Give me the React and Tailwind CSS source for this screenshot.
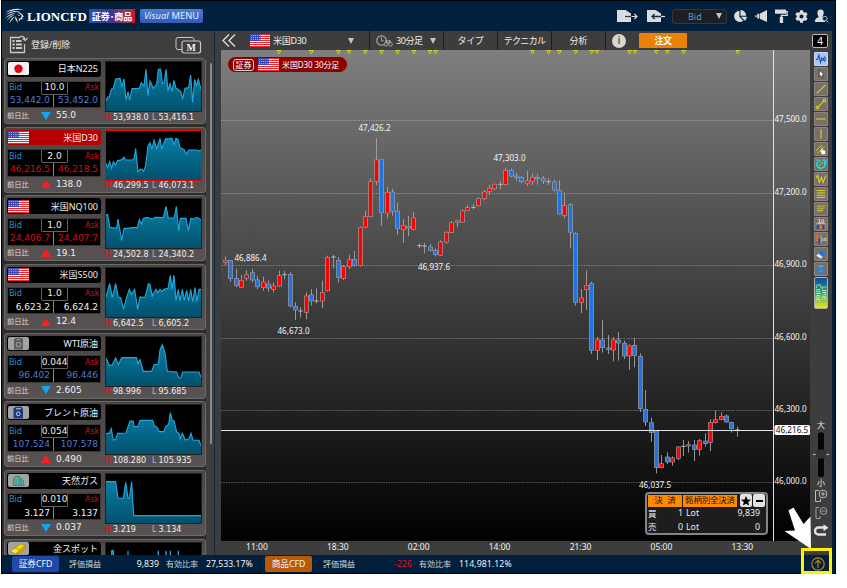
import React from "react";
import { FaChartPie, FaCog } from "react-icons/fa";

const jp = "font-['Noto_Sans','Noto_Sans_CJK_JP',sans-serif]";

/* ---------- shared drawings ---------- */

function UsFlag({ className }) {
  return (
    <svg viewBox="0 0 20 13" preserveAspectRatio="none" className={className}>
      <rect width="20" height="13" fill="#f8f0f0" />
      {[0, 2, 4, 6, 8, 10, 12].map((y) => (
        <rect key={y} y={y} width="20" height="1" fill="#f0242c" />
      ))}
      <rect width="10.5" height="7" fill="#3a48b0" />
      {[1, 3, 5].map((y) =>
        [1, 3, 5, 7, 9].map((x) => <rect key={x + "-" + y} x={x} y={y} width=".9" height=".9" fill="#b9c0ee" />)
      )}
    </svg>
  );
}

function SymbolIcon({ kind }) {
  if (kind === "us") return <UsFlag className="h-[13px] w-[21px] rounded-[1px]" />;
  if (kind === "jp")
    return (
      <svg viewBox="0 0 21 13" className="h-[13px] w-[21px]">
        <rect width="21" height="13" rx="1.5" fill="#f2f2f2" />
        <circle cx="10.5" cy="6.7" r="4.2" fill="#e00010" />
      </svg>
    );
  return (
    <svg viewBox="0 0 21 13" className="h-[13px] w-[21px]">
      <rect width="21" height="13" rx="2" fill="#a3a3a3" />
      {kind === "wti" && (
        <g>
          <path d="M6 2.2 8 .8h6l1 1.500V12.500H6z" fill="#5d5d60" />
          <path d="M8.500 2.500h4" stroke="#a8a8a8" strokeWidth=".8" />
          <circle cx="10.5" cy="7.6" r="2.3" fill="none" stroke="#a8a8a8" />
        </g>
      )}
      {kind === "brent" && (
        <g>
          <path d="M5.500 2.500 8 .8h5.500l1.500 2V12.500H5.500z" fill="#1c3a86" />
          <path d="M8 2.8h5" stroke="#c8d2ee" />
          <circle cx="10.2" cy="7.8" r="1.8" fill="none" stroke="#c8d2ee" />
        </g>
      )}
      {kind === "gas" && (
        <g fill="none" stroke="#27988a" strokeWidth="1.4">
          <path d="M5.5 11V5.5L8 2.5h3V11M8 11V5M13 11V4.5l2.5 3V11" />
          <path d="M4.5 11.3h12" />
        </g>
      )}
      {kind === "gold" && (
        <g stroke="#8f7400" strokeWidth=".5">
          <path d="M2.5 9.5 8 5l5 1.5-5 5.5z" fill="#ffe23a" />
          <path d="M7 6 12.5 2l5 1.5-5 5z" fill="#ffd400" />
          <path d="M8 12l5-5.5 4.5-3v2.5L11 12z" fill="#d9ae00" />
        </g>
      )}
    </svg>
  );
}

function Caret({ className = "" }) {
  return <span className={`inline-block h-0 w-0 border-x-[3.5px] border-t-[6px] border-x-transparent border-t-[#c4c4c4] ${className}`} />;
}

/* ---------- header ---------- */

function Header() {
  return (
    <header className={`flex h-[30px] shrink-0 items-center bg-[#00203e] ${jp}`}>
      <svg viewBox="0 0 20 16" className="ml-[3px] h-[16px] w-[20px]" fill="#ececec">
        <path d="M.5 4.500C5 1 12-.3 18.500 1.600 12 1.500 7 2.800.5 4.500z" />
        <path d="M0 7.300C4.500 3.500 10 2.200 15 3.200 9.500 3.500 5 5 0 7.300z" />
        <path d="M0 10.300C3.500 6.500 7.500 4.800 11.500 4.700 7.500 6 4 8 0 10.300z" />
        <path d="M1.500 12.800C4 9.300 6.500 7.300 10 6.300 7.500 8.200 4.500 10.500 1.500 12.800z" />
        <path d="M4.300 15.200c1-3.200 2.800-5.500 5.500-6.900-1.500 2.200-3.500 4.700-5.500 6.900z" />
        <path d="M12 4.200c3-.4 4.800 1.300 6.800 4.300l-1.600 1 .5 1.700-2.300.1-1 1.700-.8-.5.700-2.200 1.900-.1-.3-1.500 1.300-.4c-1-1.500-2.500-3-5.200-4.100z" />
        <path d="M10.300 8.300c1.400 1.500 2 3.800 2.700 6.800-1-1.500-3.300-3.500-2.700-6.800zM11.500 6.500l3.300.8-.5.700z" />
      </svg>
      <span className="ml-[2px] w-[60px] whitespace-nowrap font-['Liberation_Serif',serif] text-[13px] font-bold leading-none text-white">LIONCFD</span>
      <span className="ml-[2px] flex h-[14px] w-[46px] items-center justify-center whitespace-nowrap bg-gradient-to-r from-[#1450bd] via-[#46328e] to-[#cf0d1c] text-[9px] font-bold leading-none text-white">
        証券･商品
      </span>
      <span className="ml-[5px] flex h-[14px] w-[63px] items-center justify-center gap-[3px] whitespace-nowrap rounded-[2px] bg-gradient-to-b from-[#4a7cd6] to-[#2f5cb8] text-[9.3px] leading-none text-[#e6eefc]">
        <i>Visual</i>
        <span>MENU</span>
      </span>

      <svg viewBox="0 0 22 14" className="ml-[413px] h-[14px] w-[22px]">
        <path d="M1 1h8.500L15 4.500V13H1z" fill="#dcdcdc" />
        <path d="M15.500 7.500H21M18.300 5l2.700 2.500-2.700 2.500" fill="none" stroke="#dcdcdc" strokeWidth="1.200" />
        <path d="M9 7.500h6" stroke="#303a46" strokeWidth="1.300" />
      </svg>
      <svg viewBox="0 0 19 14" className="ml-[8px] h-[14px] w-[19px]">
        <path d="M1 1h8.500L15 4.500V13H1z" fill="#dcdcdc" />
        <path d="M6 7.500h9M8.600 5 6 7.500 8.600 10" fill="none" stroke="#182838" strokeWidth="1.300" />
        <path d="M15 7.500h4" stroke="#dcdcdc" strokeWidth="1.300" />
      </svg>
      <span className="ml-[7px] flex h-[15px] w-[55px] items-center justify-between rounded-[3px] border border-[#35383c] bg-[#1d1f22] pl-[15px] pr-[4px] text-[9px] leading-none text-[#4aa6cc]">
        Bid
        <Caret />
      </span>
      <FaChartPie className="ml-[7px] h-[12px] w-[13px] text-[#dcdcdc]" />
      <svg viewBox="0 0 13 12" className="ml-[8px] h-[12px] w-[13px]" fill="#dcdcdc">
        <path d="M12 0v12L5 8.800V3.600zM4.400 3.800v4.800H2.200V3.800zM.3 5.200h1.300v2H.3z" />
      </svg>
      <svg viewBox="0 0 13 14" className="ml-[7px] h-[14px] w-[13px]" fill="#dcdcdc">
        <path d="M0 .5h11v4.300H0zM11 2h1.800v5H7.200v1.200H5.700V5.800h5.800V3.200H11zM4.800 8h3.300v6H4.800z" />
      </svg>
      <FaCog className="ml-[7px] h-[13px] w-[13px] text-[#dcdcdc]" />
      <svg viewBox="0 0 14 14" className="ml-[7px] h-[14px] w-[14px]">
        <path d="M5.500.5c4 0 4 4.500 1.700 7.300 1 .8 2 .9 2.800 1.600V13H0c0-3.500 1.500-3.900 3.800-5C1.500 4.500 2 .5 5.500.5z" fill="#dcdcdc" />
        <circle cx="9.8" cy="9.6" r="2.300" fill="#00203e" stroke="#b5bcc4" />
        <path d="m11.500 11.500 2 2" stroke="#b5bcc4" />
      </svg>
    </header>
  );
}

/* ---------- watch list ---------- */

const quotes = [
  { name: "日本N225", icon: "jp", spread: "10.0", bid: "53,442.0", ask: "53,452.0", tone: "blue", up: false, diff: "55.0", hi: "53,938.0", lo: "53,416.1",
    line: "0,117 5,105 10,105 16,82 22,79 29,51 42,49 48,75 54,51 60,114 66,89 71,114 78,80 100,79 106,62 114,72 120,22 126,101 132,57 142,79 152,67 157,22 164,22 169,65 174,64 180,22 186,87 192,65 198,89 204,55 210,79 216,82 224,89 230,109 237,79 248,77 254,39 260,122 266,52 272,72 277,52 285,82" },
  { name: "米国D30", icon: "us", active: true, spread: "2.0", bid: "46,216.5", ask: "46,218.5", tone: "red", up: true, diff: "138.0", hi: "46,299.5", lo: "46,073.1",
    line: "0,97 5,110 11,92 17,112 22,92 28,102 35,88 42,88 48,85 54,78 58,87 80,87 84,83 89,53 96,123 102,115 108,115 113,121 119,103 126,45 132,35 138,55 144,27 152,53 162,22 167,53 174,35 180,22 186,25 192,22 198,22 204,40 210,22 216,25 222,50 229,53 235,57 242,70 248,57 272,57 279,60 285,57" },
  { name: "米国NQ100", icon: "us", spread: "1.0", bid: "24,406.7", ask: "24,407.7", tone: "red", up: true, diff: "19.1", hi: "24,502.8", lo: "24,340.2",
    line: "0,47 5,47 11,85 32,88 36,60 47,125 54,88 67,88 77,86 94,86 100,62 107,75 112,58 122,55 132,58 140,60 147,55 172,56 180,22 187,57 205,57 211,22 218,95 223,58 240,58 247,95 254,58 262,60 272,55 285,62" },
  { name: "米国S500", icon: "us", spread: "1.0", bid: "6,623.2", ask: "6,624.2", tone: "white", up: true, diff: "12.4", hi: "6,642.5", lo: "6,605.2",
    line: "0,87 11,47 19,89 29,47 37,87 44,89 53,124 60,94 70,64 77,79 86,64 95,124 102,87 117,89 127,47 132,49 139,84 150,64 155,74 162,64 168,71 174,64 186,61 193,22 198,64 204,22 210,97 217,64 222,99 229,64 235,97 242,67 248,99 254,64 260,101 267,59 273,101 279,64 285,64" },
  { name: "WTI原油", icon: "wti", spread: "0.044", bid: "96.402", ask: "96.446", tone: "blue", up: false, diff: "2.605", hi: "98.996", lo: "95.685",
    line: "0,63 10,85 18,85 29,63 37,83 47,62 92,62 96,81 102,68 112,103 137,103 144,83 157,81 162,38 169,23 177,48 184,103 212,105 218,123 224,123 230,105 279,105 285,121" },
  { name: "ブレント原油", icon: "brent", spread: "0.054", bid: "107.524", ask: "107.578", tone: "blue", up: true, diff: "0.490", hi: "108.280", lo: "105.935",
    line: "0,85 10,85 16,71 22,106 30,101 35,85 60,84 72,48 82,48 84,65 96,65 102,46 140,46 145,63 152,65 160,80 174,80 179,65 188,58 193,23 199,46 204,48 212,81 219,85 223,101 229,85 238,105 249,101 255,85 261,105 279,106 285,123" },
  { name: "天然ガス", icon: "gas", spread: "0.010", bid: "3.127", ask: "3.137", tone: "white", up: false, diff: "0.037", hi: "3.219", lo: "3.134",
    line: "0,23 29,23 36,72 52,73 59,25 66,72 70,72 77,23 83,125 285,125" },
  { name: "金スポット", icon: "gold", folded: true,
    line: "0,66 15,66 17,23 22,23 24,66 64,66 66,23 68,66 154,66 157,23 160,66 178,66 180,23 183,66 191,66 193,23 196,66 215,66 217,23 219,66 285,66" },
];

const tones = { blue: "text-[#5079d6]", red: "text-[#d40e18]", white: "text-[#f0f0f0]" };

function QuoteCard({ q }) {
  return (
    <div className={`flex w-[202px] shrink-0 gap-[4px] rounded-[3px] border border-[#6c6a69] bg-gradient-to-b from-[#4a4646] to-[#585352] pl-[2px] pt-[2px] font-['DejaVu_Sans','Noto_Sans_CJK_JP',sans-serif] leading-none text-[#efefef] ${q.folded ? "h-[17px] overflow-hidden rounded-b-none border-b-0" : "h-[66px]"}`}>
      <div className="flex w-[94px] shrink-0 flex-col">
        <div className={`flex items-center justify-between rounded-[3px] pl-[1px] pr-[3px] ${q.folded ? "h-[15px]" : "h-[16px]"} ${q.active ? "bg-[#b60000]" : "bg-black"}`}>
          <SymbolIcon kind={q.icon} />
          <span className="whitespace-nowrap font-['Noto_Sans','Noto_Sans_CJK_JP',sans-serif] text-[9px] leading-[11px]">{q.name}</span>
        </div>
        {!q.folded && (
          <>
            <div className="mt-[4px] flex h-[28px] flex-col border border-[#3b3a3a] bg-black">
              <div className="flex h-[13px] justify-between text-[8.500px]">
                <span className={`w-[33px] pl-[1px] pt-[1.500px] text-[#1d93d8] ${jp}`}>Bid</span>
                <span className="flex w-[27px] items-center justify-center rounded-b-[2px] border border-t-0 border-[#626262] text-[9px] text-[#f0f0f0]">{q.spread}</span>
                <span className={`w-[32px] pr-[1px] pt-[1.500px] text-right text-[#d40d18] ${jp}`}>Ask</span>
              </div>
              <div className={`flex grow items-center text-[9px] ${tones[q.tone]}`}>
                <span className="flex h-full w-[46px] items-center justify-end border-r border-[#888] pr-[3px]">{q.bid}</span>
                <span className="flex grow items-center justify-end pr-[2px]">{q.ask}</span>
              </div>
            </div>
            <div className="flex h-[15px] items-center text-[9px]">
              <span className="w-[34px] text-[7.300px] text-[#dcdcdc]">前日比</span>
              {q.up ? (
                <span className="h-0 w-0 border-x-[5px] border-b-[8px] border-x-transparent border-b-[#ff1a24]" />
              ) : (
                <span className="h-0 w-0 border-x-[5px] border-t-[8px] border-x-transparent border-t-[#12a5f4]" />
              )}
              <span className="ml-[5px]">{q.diff}</span>
            </div>
          </>
        )}
      </div>
      <div className="flex w-[97px] shrink-0 flex-col">
        <div className={`h-[51px] w-[97px] shrink-0 border bg-black ${q.active ? "border-[#f50000]" : "border-[#222]"}`}>
          <svg viewBox="0 0 285 147" preserveAspectRatio="none" className="block h-full w-full">
            <defs>
              <linearGradient id={"area-" + q.icon + q.spread} x1="0" y1="0" x2="0" y2="147" gradientUnits="userSpaceOnUse">
                <stop offset="0" stopColor="#0a86ad" />
                <stop offset="1" stopColor="#02506c" />
              </linearGradient>
            </defs>
            <polygon points={`0,147 ${q.line} 285,147`} fill={`url(#area-${q.icon}${q.spread})`} />
            <polyline points={q.line} fill="none" stroke="#1fa6dc" strokeWidth="3.400" />
          </svg>
        </div>
        {!q.folded && (
          <div className="flex h-[13px] items-center whitespace-nowrap text-[8px]">
            <span className="w-[8px] text-[#e01018]">H</span>
            <span className="w-[39px]">{q.hi}</span>
            <span className="w-[6.500px] text-[#8fc0dc]">L</span>
            <span>{q.lo}</span>
          </div>
        )}
      </div>
    </div>
  );
}

function WatchList() {
  return (
    <aside className="flex h-full w-[213px] shrink-0 flex-col border-r border-[#16273a] bg-[#3e3e3e]">
      <div className="flex h-[27px] shrink-0 items-center pl-[7px] pr-[12px]">
        <svg viewBox="0 0 20 19" className="h-[19px] w-[20px]" fill="none" stroke="#c8c8c8">
          <path d="M11 2.500H1.500v15h14V9" strokeWidth="1.300" />
          <path d="M3.500 6h2.200M3.500 9.500h2.200M3.500 13h2.200M7 6h5.500M7 9.500h6M7 13h6" strokeWidth="2" />
          <path d="M9.500 3c2.500-2.800 6-2 6.300 1.800M13.500 3.500l2.500 2 2.500-2.500" strokeWidth="1.200" />
        </svg>
        <span className={`ml-[2px] text-[9px] leading-none text-[#ececec] ${jp}`}>登録/削除</span>
        <svg viewBox="0 0 27 18" className="ml-auto h-[18px] w-[27px]" fill="none" stroke="#c8c8c8">
          <rect x="1" y="1.500" width="18" height="12" rx="2" />
          <rect x="7" y="5" width="18.500" height="12" rx="2" fill="#3e3e3e" strokeWidth="1.200" />
          <text x="16.300" y="14.500" textAnchor="middle" fontSize="10" fontWeight="700" fontFamily="Liberation Serif, serif" fill="#f2f2f2" stroke="none">M</text>
        </svg>
      </div>
      <div className="flex min-h-0 grow overflow-hidden">
        <div className="flex w-[204px] shrink-0 flex-col gap-[2.700px] bg-[#2c2c2c] pl-[2px]">
          {quotes.map((q) => (
            <QuoteCard key={q.name} q={q} />
          ))}
        </div>
        <div className="ml-[4px] mt-[5px] h-[381px] w-[2px] rounded bg-[#8a8a8a]" />
      </div>
    </aside>
  );
}

/* ---------- chart toolbar ---------- */

function ChartToolbar() {
  const cell = "flex h-full items-center border-l border-[#1d1d1d]";
  return (
    <div className={`flex h-[19px] shrink-0 items-center whitespace-nowrap bg-[#3d3d3d] text-[9px] leading-none text-[#f0f0f0] ${jp}`}>
      <svg viewBox="0 0 14 13" className="ml-[7px] h-[13px] w-[14px]" fill="none" stroke="#dcdcdc" strokeWidth="1.400">
        <path d="M7 .5 1 6.500l6 6M13 .5 7 6.500l6 6" />
      </svg>
      <UsFlag className="ml-[14px] h-[13px] w-[20px]" />
      <span className="ml-[3px] w-[75px] tracking-[-0.3px]">米国D30</span>
      <Caret />
      <div className={`ml-[15px] w-[74px] pl-[6px] ${cell}`}>
        <svg viewBox="0 0 17 12" className="h-[12px] w-[17px]" fill="none" stroke="#a8a8a8">
          <circle cx="5.500" cy="5.500" r="4.700" strokeWidth="1.200" />
          <path d="M5.500 2.500v3.300h2.300" />
          <path d="M10.500 5v4M13.500 5v4" strokeWidth="2" />
          <circle cx="10" cy="9.300" r="1.800" fill="#3d3d3d" />
          <circle cx="14.500" cy="9.300" r="1.800" fill="#3d3d3d" />
        </svg>
        <span className="ml-[3px] w-[34px] tracking-[-0.4px]">30分足</span>
        <Caret />
      </div>
      <div className={`w-[54px] justify-center tracking-[-0.4px] ${cell}`}>タイプ</div>
      <div className={`w-[54px] justify-center tracking-[-0.700px] ${cell}`}>テクニカル</div>
      <div className={`w-[54px] justify-center ${cell}`}>分析</div>
      <div className={`grow ${cell}`}>
        <span className="ml-[6px] flex h-[14px] w-[14px] items-center justify-center rounded-full bg-[#d6d6d6] font-['DejaVu_Sans',sans-serif] text-[11px] text-[#333]">i</span>
        <span className="ml-[13px] flex h-[15px] w-[48px] items-center justify-center rounded-[1px] bg-[#e88307] text-[9px] font-bold tracking-[-0.5px] text-white">注文</span>
      </div>
      <span className="mr-[4px] mt-[1px] flex h-[14px] w-[16px] items-center justify-center rounded-[2px] border-[1.500px] border-[#b8b8b8] bg-black text-[10px] text-white">4</span>
    </div>
  );
}

/* ---------- candlestick chart ---------- */

const STEP = 16.17;
const FIRST = 13;

// Bars are [kind, open/close top, open/close bottom, high, low] in thirds of a pixel,
// measured from each block's own base line.
const blocks = [
  {
    base: 105,
    bars: [
      ["r", 526, 532, 514, 540], ["b", 526, 581, 526, 590], ["b", 580, 601, 552, 607], ["r", 586, 607, 570, 609], ["r", 569, 580, 556, 587],
      ["b", 563, 585, 552, 592], ["b", 585, 605, 572, 612], ["r", 591, 608, 575, 617], ["b", 597, 609, 586, 620], ["r", 603, 613, 592, 622],
      ["r", 572, 603, 557, 606], ["d", 569, 569, 558, 583], ["b", 568, 663, 562, 668], ["b", 664, 675, 652, 705], ["d", 678, 678, 667, 697],
      ["r", 633, 682, 622, 703], ["b", 629, 648, 612, 662], ["d", 648, 648, 610, 656], ["r", 622, 648, 587, 670], ["r", 517, 617, 512, 620],
      ["d", 516, 516, 510, 550], ["b", 526, 578, 516, 592], ["r", 544, 581, 540, 585], ["r", 524, 545, 509, 552], ["b", 523, 541, 498, 545],
      ["r", 427, 542, 424, 545], ["r", 395, 426, 376, 430], ["r", 290, 394, 280, 396], ["r", 225, 289, 160, 300], ["b", 224, 383, 224, 423],
      ["r", 322, 384, 305, 400], ["b", 321, 379, 311, 392], ["b", 378, 431, 352, 449], ["r", 421, 434, 403, 474], ["b", 424, 429, 393, 454],
      ["r", 399, 433, 381, 436], ["d", 482, 482, 476, 489], ["d", 483, 483, 474, 505], ["b", 486, 497, 477, 500], ["b", 496, 509, 490, 514],
      ["r", 471, 511, 466, 513], ["r", 442, 471, 438, 476], ["r", 413, 442, 408, 444], ["r", 408, 412, 405, 427], ["r", 378, 411, 374, 413],
    ],
  },
  {
    base: 240,
    bars: [
      ["r", 233, 241, 225, 243], ["d", 232, 232, 222, 238], ["r", 206, 227, 202, 230], ["r", 186, 206, 180, 210], ["r", 175, 184, 164, 195],
      ["r", 163, 176, 160, 180], ["d", 163, 163, 154, 177], ["r", 121, 163, 115, 165], ["b", 121, 138, 116, 142], ["b", 138, 142, 128, 152],
      ["b", 142, 155, 138, 160], ["r", 153, 160, 123, 167], ["r", 142, 155, 130, 165], ["b", 142, 146, 132, 164], ["b", 146, 153, 138, 162],
      ["d", 155, 155, 145, 165], ["b", 156, 180, 149, 185], ["b", 181, 252, 151, 254], ["r", 227, 256, 187, 264], ["b", 224, 307, 219, 355],
      ["b", 310, 517, 307, 527], ["r", 504, 517, 477, 549], ["r", 466, 479, 421, 540], ["b", 461, 661, 455, 672], ["r", 630, 661, 620, 690],
      ["b", 630, 653, 570, 668], ["b", 654, 658, 615, 672], ["r", 630, 660, 622, 694], ["b", 630, 639, 607, 692], ["b", 640, 678, 632, 687],
    ],
  },
  {
    base: 690,
    bars: [
      ["r", 198, 228, 193, 270], ["b", 196, 227, 173, 262], ["b", 229, 386, 220, 396], ["b", 388, 426, 330, 438], ["b", 428, 458, 413, 485],
      ["b", 452, 563, 450, 580], ["r", 551, 563, 525, 565], ["b", 531, 546, 517, 552], ["r", 534, 546, 529, 557], ["r", 501, 535, 498, 540],
      ["d", 499, 499, 480, 528], ["r", 494, 498, 483, 518], ["b", 495, 508, 480, 543], ["r", 482, 508, 477, 527], ["b", 483, 491, 460, 500],
      ["r", 427, 487, 418, 513], ["r", 419, 428, 392, 430], ["r", 409, 419, 397, 421], ["b", 408, 426, 403, 428], ["b", 427, 446, 425, 458],
      ["d", 450, 450, 440, 470],
    ],
  },
];

const candles = blocks
  .flatMap((b) => b.bars.map(([k, t, bt, h, l]) => [k, t + b.base, bt + b.base, h + b.base, l + b.base]))
  .map(([kind, top, bottom, high, low], i) => ({
    kind,
    x: Math.round((FIRST + i * STEP) / 3 - 0.5) + 0.5,
    top: (top - 150 + 0) / 3 + 50,
    bottom: (bottom - 150) / 3 + 50,
    high: (high - 150) / 3 + 50,
    low: (low - 150) / 3 + 50,
  }));

const grid = [
  [70.5, "47,500.0"],
  [143.5, "47,200.0"],
  [215.5, "46,900.0"],
  [288.5, "46,600.0"],
  [360.5, "46,300.0"],
  [432.5, "46,000.0"],
];

const peaks = [
  [13.5, 211, "46,886.4"],
  [56.5, 283.5, "46,673.0"],
  [137.5, 80.5, "47,426.2"],
  [197, 220, "46,937.6"],
  [272.5, 111, "47,303.0"],
  [418, 437.5, "46,037.5"],
];

const events = [58, 90.3, 117.3, 128, 144.3, 160.7, 176.7, 193, 209, 214.7, 311.5, 327.7, 338.3, 354.7, 370.7, 376, 408.7, 414, 435.3, 446.3, 462.7, 516.7];

function CandleChart() {
  return (
    <svg viewBox="0 0 589 491" className="block h-[491px] w-[589px]" fontFamily="Noto Sans, sans-serif" fontSize="8" fill="#f4f4f4">
      <defs>
        <linearGradient id="backdrop" x1="0" y1="0" x2="0" y2="1">
          <stop offset="0" stopColor="#7f7f7f" />
          <stop offset="0.55" stopColor="#383838" />
          <stop offset="1" stopColor="#000" />
        </linearGradient>
      </defs>
      <rect width="589" height="491" fill="url(#backdrop)" />
      {events.map((x) => (
        <g key={x} fill="#f2f200">
          <path d={`M${x - 2.3} .3h4.600L${x} 4.300z`} />
          <rect x={x - 0.7} y="1.200" width="1.400" height="1.200" fill="#55550a" />
        </g>
      ))}
      {grid.map(([y, label]) => (
        <g key={label}>
          <path d={`M0 ${y}H552`} stroke="#fff" strokeOpacity=".3" strokeDasharray="1.500 1" />
          <text x="553.5" y={y + 1.5} textLength="32" lengthAdjust="spacingAndGlyphs">
            {label}
          </text>
        </g>
      ))}
      {candles.map((c, i) => (
        <g key={i}>
          <path d={`M${c.x} ${c.high}V${c.low}`} stroke="#a4a4a4" strokeWidth=".9" />
          {c.kind === "d" ? (
            <path d={`M${c.x - 2.2} ${c.top}h4.400`} stroke="#bdbdbd" strokeWidth="1" />
          ) : (
            <>
              <rect x={c.x - 2.3} y={c.top - 0.3} width="4.600" height={Math.max(c.bottom - c.top, 1) + 0.6} fill="#a8a8a8" />
              <rect x={c.x - 1.7} y={c.top + 0.2} width="3.400" height={Math.max(c.bottom - c.top - 0.4, 0.8)} fill={c.kind === "r" ? "#ff0000" : "#2272e0"} />
            </>
          )}
        </g>
      ))}
      <path d="M0 380.500H553" stroke="#e4e4e4" />
      <path d="M552.500 0V491" stroke="#e0e0e0" />
      <rect x="553.5" y="375" width="35.500" height="10" rx="1.500" fill="#fff" />
      <text x="554.8" y="383" fill="#111" textLength="32.500" lengthAdjust="spacingAndGlyphs">46,216.5</text>
      {peaks.map(([x, y, t]) => (
        <text key={t} x={x} y={y} textLength="32" lengthAdjust="spacingAndGlyphs">
          {t}
        </text>
      ))}
    </svg>
  );
}

function SymbolBadge() {
  return (
    <div className={`absolute left-[7px] top-[7px] flex h-[15px] w-[119px] items-center whitespace-nowrap rounded-full bg-[#8c0000] pl-[5px] text-[8px] leading-none text-white ${jp}`}>
      <span className="flex h-[12px] w-[21px] items-center justify-center rounded-[3px] border border-[#e8c8c8]">証券</span>
      <UsFlag className="ml-[4px] h-[13px] w-[21px]" />
      <span className="ml-[3px] tracking-[-0.1px]">米国D30 30分足</span>
    </div>
  );
}

function PositionPanel() {
  const btn = "flex h-[12px] items-center justify-center bg-[#ff8a00] text-[8.500px] text-[#2c1600]";
  const cap = "flex h-[13px] w-[12px] items-center justify-center rounded-[2px] bg-[#e2e2e2]";
  return (
    <div className={`absolute bottom-[6px] left-[424px] h-[43px] w-[123px] rounded-[4px] border-2 border-[#858585] bg-[#1d1d1d] px-[1px] text-[8.800px] leading-none text-[#ececec] ${jp}`}>
      <div className="flex items-center gap-[1px]">
        <span className={`w-[34px] ${btn}`}>決&nbsp;&nbsp;済</span>
        <span className={`w-[54px] whitespace-nowrap tracking-[-0.2px] ${btn}`}>銘柄別全決済</span>
        <span className={`ml-[2px] ${cap}`}>
          <svg viewBox="0 0 10 10" className="h-[10px] w-[10px]">
            <path d="M5 0l1.400 3.400 3.600.3-2.800 2.300.9 3.600L5 7.700 1.900 9.600l.9-3.600L0 3.700l3.600-.3z" fill="#000" />
          </svg>
        </span>
        <span className={cap}>
          <span className="h-[2px] w-[7px] bg-black" />
        </span>
      </div>
      {[
        ["買", "1", "9,839"],
        ["売", "0", "0"],
      ].map(([side, lot, pl]) => (
        <div key={side} className="flex h-[13.500px] items-center">
          <span className="w-[10px] text-[8.500px]">{side}</span>
          <span className="w-[25px] text-right">{lot}</span>
          <span className="ml-[3px]">Lot</span>
          <span className="ml-auto pr-[5px]">{pl}</span>
        </div>
      ))}
    </div>
  );
}

function TimeAxis() {
  return (
    <div className="flex h-[14px] shrink-0 items-center bg-[#3d3d3d] pl-[1.500px] font-['Noto_Sans',sans-serif] text-[8.500px] leading-none text-[#f2f2f2]">
      {["11:00", "18:30", "02:00", "14:00", "21:30", "05:00", "13:30"].map((t) => (
        <span key={t} className="w-[80.900px] shrink-0 pb-[2px] text-center">
          {t}
        </span>
      ))}
    </div>
  );
}

/* ---------- drawing tools ---------- */

const Y = "#e0d820";
const tools = [
  <path key="a" d="M1 7.500h2l1.500-5 2 8.500 1.500-5 .8 2.500M9.500 5.500q1 1.500 0 3.500M11 4q2 3 0 6" stroke="#1b4fb8" strokeWidth="1.300" fill="none" />,
  <path key="b" d="M5 2v8.500l1.800-1.500L8 12l1.500-.6L8.300 8.500l2.500-.3z" fill="#fff" stroke="#000" strokeWidth=".7" />,
  <path key="c" d="M2 12 12 2.500" stroke={Y} strokeWidth="1.200" />,
  <g key="d" stroke={Y} fill="none" strokeWidth="1.200"><path d="M4 10l6-6" /><circle cx="2.900" cy="11" r="1.500" /><circle cx="11" cy="3" r="1.500" /></g>,
  <path key="e" d="M1.500 7h11" stroke={Y} strokeWidth="1.200" />,
  <path key="f" d="M7 1.500v11" stroke={Y} strokeWidth="1.200" />,
  <g key="g"><path d="M1 9l7-6.500M3 12l8-8" stroke={Y} /><path d="M7.500 6v3L6 8.500 8 13h4V9L8.800 8V6z" fill="#fff" /></g>,
  <g key="h" fill="none"><path d="M3 4.500C1 8 3 12 7 12s6-4.500 3.800-8" stroke="#15e0ea" strokeWidth="2" /><path d="M8.500 2.500h4v4" stroke="#15e0ea" strokeWidth="1.600" /><path d="M1.500 2.500h4v3" stroke="#15e0ea" strokeWidth="1.300" /><path d="M5 9l4-4" stroke={Y} /></g>,
  <path key="i" d="M1 6 3 2.500 5 11l2.500-6 2 6 3-8" stroke={Y} fill="none" strokeWidth="1.200" />,
  <path key="j" d="M2 3h10M2 5.700h10M2 8.400h10M2 11h10" stroke={Y} strokeWidth="1.100" />,
  <path key="k" d="M2 3.500h10M2 6h9M2 8.500h7M4 11l2.500-2.500 3 .5" stroke={Y} fill="none" strokeWidth=".9" />,
  <g key="l"><text x="7" y="5.500" fontSize="6" fill="#fff" textAnchor="middle" fontFamily="DejaVu Sans">10</text><path d="M2 7.500V6.500h10v1" stroke="#eee" fill="none" strokeWidth=".7" /><path d="M2 8h2.500v5H2zM9 8h2v5H9z" fill="#1746c8" /><path d="M5.500 8h2v5h-2zM11.500 8H13v5h-1.500z" fill="#f07018" /></g>,
  <g key="m"><text x="10.500" y="9" fontSize="5" fill="#fff" textAnchor="middle" fontFamily="DejaVu Sans">10</text><path d="M1.500 1.500h2.500v8H1.500z" fill="#f07018" /><path d="M4 6h2v7H4z" fill="#1746c8" /><path d="M7 2v10" stroke="#ddd" strokeWidth=".6" /></g>,
  <g key="n"><path d="M1.500 9 7.500 2.500l5 3.500-5 6.500z" fill="#1c78d8" /><path d="M1.500 9 3.800 6.500l5 3.800L7 12.500z" fill="#eaf2ff" /></g>,
  <g key="o"><path d="M3 4h8l-1 9H4z" fill="#2f7fc4" /><ellipse cx="7" cy="3.700" rx="4" ry="1.500" fill="#6fa8d8" stroke="#2b6aa8" strokeWidth=".6" /><path d="M5.500 7h3v3h-3z" fill="none" stroke="#5a9fd8" strokeWidth=".7" /></g>,
];

function DrawingTools() {
  return (
    <div className={`flex w-[22px] shrink-0 flex-col items-center bg-[#3d3d3d] pt-[1.500px] text-[8px] leading-none text-[#e6e6e6] ${jp}`}>
      <div className="flex flex-col gap-[1px]">
        {tools.map((t, i) => (
          <svg key={i} viewBox="0 0 14 14" className={`h-[14.060px] w-[14px] rounded-[1px] border ${i === 0 ? "border-[#c4d8f6] bg-[#a8c8f4]" : "border-[#8f877e] bg-[#787068]"}`}>
            {t}
          </svg>
        ))}
      </div>
      <div className="mt-[1px] flex h-[32px] w-[14px] items-center justify-center rounded-[2px] border border-[#b0b0a0] bg-gradient-to-b from-[#1648a0] via-[#34a060] to-[#e8e800]">
        <span className="text-center text-[7px] leading-[6px] text-[#dff0e0] [writing-mode:vertical-rl]">
          Line
          <br />
          Color
        </span>
      </div>
      <span className="mt-[112px]">大</span>
      <svg viewBox="0 0 16 48" className="mt-[2px] h-[48px] w-[16px]">
        <rect x="4.5" y="1" width="7" height="45.500" rx="2.500" fill="#050505" stroke="#555" strokeWidth=".6" />
        <rect x="3" y="18.500" width="10" height="9" rx="2" fill="#333" />
        <path d="M0 23.500h2.500M13.500 23.500H16" stroke="#ccc" />
      </svg>
      <span>小</span>
      <svg viewBox="0 0 14 14" className="mt-[1.500px] h-[14px] w-[14px]" fill="none" stroke="#bbb">
        <path d="M5 1.500H1.500v11h5V10" />
        <circle cx="9" cy="5" r="3.900" />
        <path d="M6.800 5h4.400M9 2.800v4.400" />
      </svg>
      <svg viewBox="0 0 14 14" className="mt-[3px] h-[14px] w-[14px]" fill="none" stroke="#a0a0a0">
        <path d="M5 1.500H2v11h4V10" />
        <circle cx="9.5" cy="5" r="3.400" />
        <path d="M7.500 5h4" />
      </svg>
      <svg viewBox="0 0 15 12" className="mt-[4px] h-[12px] w-[15px]">
        <path d="M12 10.500H4.500a3.500 3.500 0 0 1 0-7H10" fill="none" stroke="#e4e4e4" strokeWidth="2.400" />
        <path d="M9.500.2 14.500 3.700 9.500 7.200z" fill="#e4e4e4" />
      </svg>
    </div>
  );
}

/* ---------- footer ---------- */

function Footer() {
  const tag = "flex h-[16px] w-[47px] items-center justify-center rounded-[2px] text-[8.700px]";
  const label = "text-[8px] text-[#ccd0d4]";
  return (
    <footer className={`flex h-[18px] shrink-0 items-center whitespace-nowrap bg-[#00203e] text-[8.700px] leading-none text-[#f4f4f4] ${jp}`}>
      <span className={`ml-[10px] bg-[#2049a6] ${tag}`}>証券CFD</span>
      <span className={`ml-[10px] w-[48px] ${label}`}>評価損益</span>
      <span className="w-[42px] text-right">9,839</span>
      <span className={`ml-[7px] ${label}`}>有効比率</span>
      <span className="ml-[8px] w-[49px]">27,533.17%</span>
      <span className={`ml-[10px] bg-[#b85a06] ${tag}`}>商品CFD</span>
      <span className={`ml-[11px] w-[48px] ${label}`}>評価損益</span>
      <span className="w-[41px] text-right text-[#e0101c]">-226</span>
      <span className={`ml-[7px] ${label}`}>有効比率</span>
      <span className="ml-[8px] tracking-[0.1px]">114,981.12%</span>
      <svg viewBox="0 0 14 14" className="ml-auto mr-[10px] h-[14px] w-[14px]" fill="none" stroke="#b8860f" strokeWidth="1.200">
        <circle cx="7" cy="7" r="6.200" />
        <path d="M7 11V3.500M4 6.300l3-3 3 3" />
      </svg>
    </footer>
  );
}

export default function App() {
  return (
    <div className="h-[588px] w-[847px] overflow-hidden bg-white">
      <div className="relative ml-[1px] flex h-[574px] w-[835px] flex-col border border-black bg-[#00203e]">
        <Header />
        <div className="flex min-h-0 grow">
          <WatchList />
          <main className="flex w-[617px] shrink-0 flex-col">
            <ChartToolbar />
            <div className="flex min-h-0 grow">
              <div className="flex w-[595px] shrink-0 flex-col">
                <div className="h-[491px] bg-[#3d3d3d] pl-[6px]">
                  <div className="relative">
                    <CandleChart />
                    <SymbolBadge />
                    <PositionPanel />
                  </div>
                </div>
                <TimeAxis />
              </div>
              <DrawingTools />
            </div>
          </main>
        </div>
        <Footer />
        <svg viewBox="0 0 28 44" className="absolute left-[782px] top-[506px] h-[44px] w-[28px]">
          <path d="M4.500 3.500 9.500.5 19.500 17l7-7.500L27 42 .5 24l10.500-.5z" fill="#fff" />
        </svg>
        <div className="absolute left-[799px] top-[547px] h-[26px] w-[31px] border-[3.500px] border-[#fff200]" />
      </div>
    </div>
  );
}
